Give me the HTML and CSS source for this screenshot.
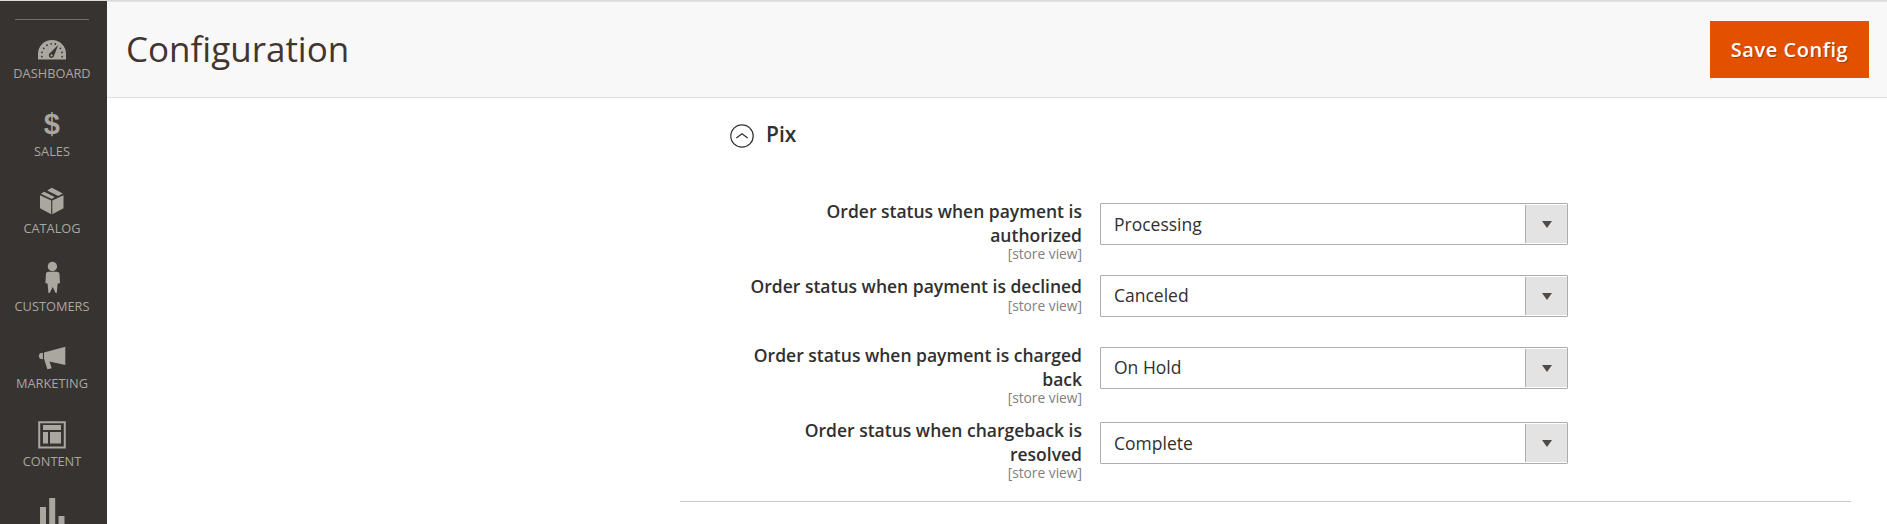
FILE: index.html
```html
<!DOCTYPE html>
<html lang="en">
<head>
<meta charset="utf-8">
<title>Configuration</title>
<link rel="stylesheet" href="styles.css">
</head>
<body>
<div class="layout">
  <nav class="sidebar">
    <div class="sidebar-rule"></div>
    <a class="item">
      <svg class="icon" viewBox="0 0 40 36"><path fill="currentColor" d="M6 30.500V25a14 14 0 0 1 28 0v5.500z"/><g fill="#373330"><path d="M26.300 15.800L22.200 26.200a2.700 2.700 0 1 1-3.800-2.500z"/><circle cx="9.800" cy="27.600" r=".9"/><circle cx="10" cy="23.400" r=".9"/><circle cx="11.800" cy="19.300" r=".9"/><circle cx="15" cy="16.200" r=".9"/><circle cx="19.200" cy="14.800" r=".9"/><circle cx="23.300" cy="15" r=".9"/><circle cx="28.300" cy="19.300" r=".9"/><circle cx="30" cy="23.400" r=".9"/><circle cx="30.200" cy="27.600" r=".9"/></g><circle cx="19.600" cy="26.400" r="1.100" fill="currentColor"/></svg>
      <span>DASHBOARD</span>
    </a>
    <a class="item odd">
      <svg class="icon" viewBox="0 0 40 36"><text class="dollar" x="19.800" y="27" text-anchor="middle">$</text></svg>
      <span>SALES</span>
    </a>
    <a class="item">
      <svg class="icon" viewBox="0 0 40 36"><g fill="currentColor"><path d="M8 11.200l11.200 5.400V30.200L8 24.200z"/><path d="M31.500 11.200l-11.200 5.400V30.200l11.200-6z"/><path d="M8.800 9.800l3.400-2 10.600 5.300-3 1.800z"/><path d="M15.200 6.400l4.600-2.600 11 5.800-4.600 2.500z"/></g></svg>
      <span>CATALOG</span>
    </a>
    <a class="item odd">
      <svg class="icon" viewBox="0 0 40 36"><g fill="currentColor"><circle cx="20.400" cy="4.500" r="4.700"/><path d="M16.500 9.800h8c2 0 3 1 3 2.800l.5 8.400-2.400.8-.8 9.200h-1.200l-2.900-6-3 6h-1.300l-.8-9.200-2.200-.8.500-8.400c0-1.800.8-2.800 2.600-2.800z"/></g></svg>
      <span>CUSTOMERS</span>
    </a>
    <a class="item">
      <svg class="icon" viewBox="0 0 40 36"><g fill="currentColor"><path d="M33.300 7.800V26l-15.800-3.400 2.200 6.600-4.300 1-3.400-10.400v-6.400z"/><path d="M10.900 13.700v6.600l-3-.6-1.200-2.800 1.200-2.700z"/></g></svg>
      <span>MARKETING</span>
    </a>
    <a class="item odd">
      <svg class="icon" viewBox="0 0 40 36"><path fill="none" stroke="currentColor" stroke-width="2" d="M7.200 5.200h25.600v25.200H7.200z"/><path fill="currentColor" d="M11 8h18v5H11zM11 15h5v11.500h-5zM18 15h11v11.500H18z"/></svg>
      <span>CONTENT</span>
    </a>
    <a class="item">
      <svg class="icon" viewBox="0 0 40 36"><path fill="currentColor" d="M8 13h6v23H8zM17.200 4h6v32h-6zM26.500 22h6v14h-6z"/></svg>
    </a>
  </nav>
  <div class="page">
    <header class="header">
      <h1 class="title">Configuration</h1>
      <button class="save">Save Config</button>
    </header>
    <main class="section">
      <div class="section-head">
        <svg class="toggle" viewBox="0 0 24 24"><circle cx="12" cy="12" r="11.200"/><path d="M6.300 14L12 9.700l5.700 4.300"/></svg>
        <h2 class="section-title">Pix</h2>
      </div>
      <div class="row">
        <div class="label">Order status when payment is<br>authorized<span class="scope">[store view]</span></div>
        <div class="select"><span class="value">Processing</span><span class="arrow"></span></div>
      </div>
      <div class="row single">
        <div class="label">Order status when payment is declined<span class="scope">[store view]</span></div>
        <div class="select raised"><span class="value">Canceled</span><span class="arrow"></span></div>
      </div>
      <div class="row tall">
        <div class="label">Order status when payment is charged<br>back<span class="scope">[store view]</span></div>
        <div class="select raised"><span class="value">On Hold</span><span class="arrow"></span></div>
      </div>
      <div class="row last">
        <div class="label">Order status when chargeback is<br>resolved<span class="scope">[store view]</span></div>
        <div class="select"><span class="value">Complete</span><span class="arrow"></span></div>
      </div>
    </main>
  </div>
</div>
</body>
</html>
```
FILE: styles.css
```css
* { box-sizing: border-box; }
body {
  margin: 0;
  height: 524px;
  overflow: hidden;
  background: #fff;
  color: #303030;
  font-family: "Open Sans", "Noto Sans", sans-serif;
}
.layout {
  display: flex;
  height: 524px;
  border-top: 1px solid #dadcdc;
  overflow: hidden;
}
.sidebar {
  width: 107px;
  flex: none;
  padding: 18px 3px 0 0;
  background: #373330;
  color: #aaa6a0;
  overflow: hidden;
}
.sidebar-rule {
  width: 74px;
  height: 1px;
  margin: 0 0 9px 15px;
  background: #736f6b;
}
.item {
  display: flex;
  flex-direction: column;
  align-items: center;
  height: 78px;
  font-size: 12.8px;
  line-height: 16px;
}
.item.odd { height: 77px; }
.icon {
  width: 40px;
  height: 36px;
  flex: none;
  overflow: visible;
}
.dollar {
  font: bold 29px "Liberation Sans", sans-serif;
  fill: currentColor;
}
.page { flex: 1; }
.header {
  display: flex;
  align-items: center;
  justify-content: space-between;
  height: 97px;
  padding: 0 18px 0 19px;
  background: #f8f8f8;
  border-top: 1px solid #e3e3e3;
  border-bottom: 1px solid #e0e0e0;
}
.title {
  margin: 0;
  padding-bottom: 2px;
  color: #41362f;
  font-size: 35px;
  font-weight: 400;
  line-height: 48px;
}
.save {
  width: 159px;
  height: 57px;
  padding: 0;
  border: 0;
  background: #e35000;
  color: #fff;
  font: 600 20px/28px "Open Sans", sans-serif;
  letter-spacing: .55px;
  text-shadow: 1px 1px 0 rgba(0, 0, 0, .3);
}
.section {
  width: 1171px;
  height: 404px;
  margin-left: 573px;
  padding-top: 18px;
  border-bottom: 1px solid #ccc;
}
.section-head {
  display: flex;
  align-items: center;
  height: 36px;
  margin-bottom: 51px;
  padding-left: 50px;
}
.toggle {
  width: 24px;
  height: 24px;
  margin-top: 3px;
  fill: none;
  stroke: #303030;
  stroke-width: 1.2;
}
.section-title {
  margin: 0 0 0 12px;
  font-size: 21px;
  font-weight: 600;
  line-height: 28px;
}
.row {
  display: grid;
  grid-template-columns: 402px 468px;
  column-gap: 18px;
  height: 72px;
}
.row.tall { height: 75px; }
.label {
  margin-top: -4px;
  font-size: 17.5px;
  font-weight: 600;
  line-height: 24px;
  text-align: right;
  white-space: nowrap;
}
.row.single .label { margin-top: -1px; }
.row.single .scope { margin-top: 1px; }
.scope {
  display: block;
  color: #808080;
  font-size: 13.750px;
  font-weight: 400;
  line-height: 14px;
}
.select {
  display: flex;
  align-items: center;
  justify-content: space-between;
  height: 42px;
  padding: 1px 0 1px 13px;
  border: 1px solid #adadad;
  border-radius: 1px;
}
.value {
  font-size: 17.5px;
  line-height: 24px;
}
.raised .value { padding-bottom: 2px; }
.arrow {
  display: flex;
  align-items: center;
  justify-content: center;
  width: 42px;
  height: 38px;
  background: #e3e3e3;
  border-left: 1px solid #adadad;
}
.arrow::after {
  content: "";
  border: 5px solid transparent;
  border-top: 7px solid #514943;
  border-bottom: 0;
}
```
